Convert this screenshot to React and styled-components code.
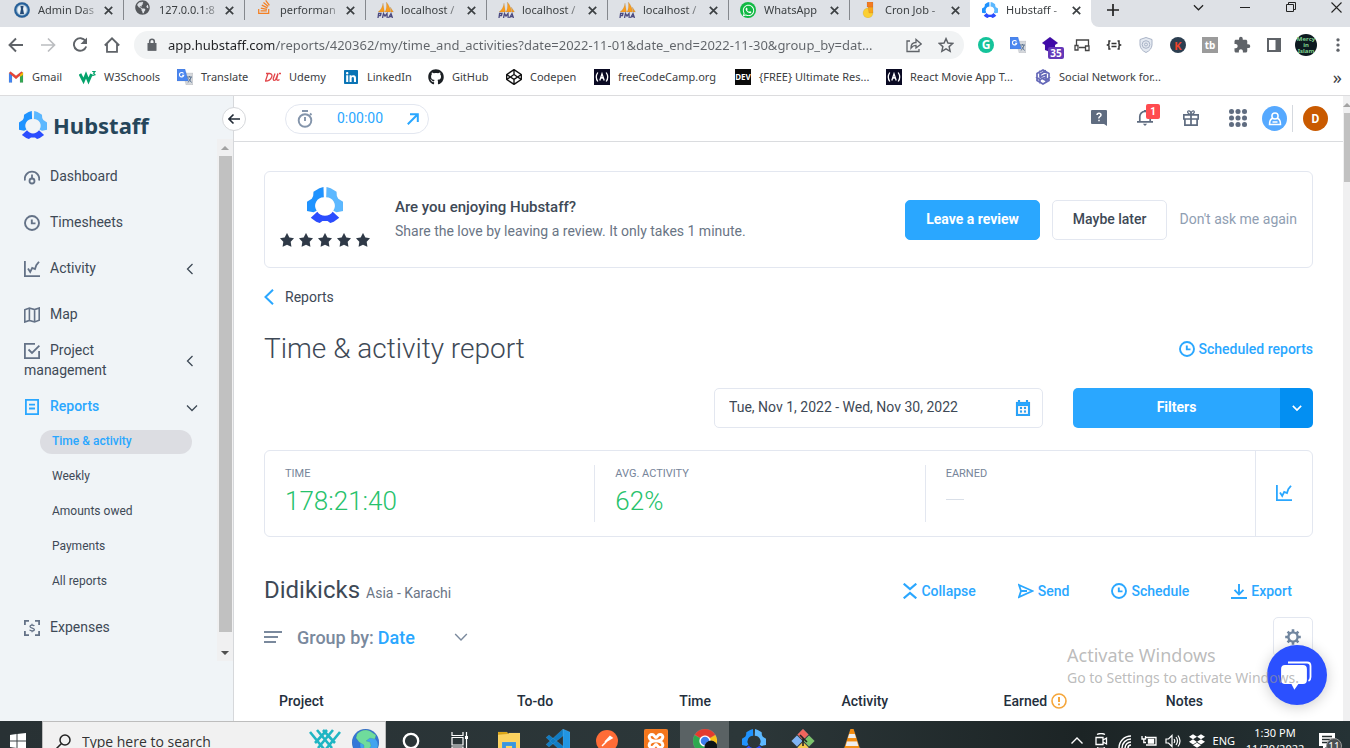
import React from "react";
import styled, { createGlobalStyle } from "styled-components";
import {
  FaStackOverflow,
  FaWhatsapp,
  FaGithub,
  FaLinkedin,
  FaCodepen,
  FaDropbox,
  FaGlobeAmericas,
} from "react-icons/fa";
import { MdExtension } from "react-icons/md";

const UI_FONT = '"Noto Sans", "Open Sans", sans-serif';
const APP_FONT = 'Roboto, "Liberation Sans", sans-serif';
const BLUE = "#2aa7ff";

const GlobalStyle = createGlobalStyle`
  *, *::before, *::after { box-sizing: border-box; }
  body { margin: 0; overflow: hidden; font-family: ${APP_FONT}; font-size: 14px; color: #3e4956; background: #fff; }
  button, input, select { font: inherit; color: inherit; }
  button { border: 0; padding: 0; background: none; cursor: pointer; }
  a { color: inherit; text-decoration: none; }
  h1, h2, p, ul { margin: 0; padding: 0; font-weight: inherit; }
  ul { list-style: none; }
`;

/* ---------- icons ---------- */

const Svg = styled.svg.attrs({ "aria-hidden": true })`
  display: block;
  flex: none;
  width: ${(p) => p.$w || 16}px;
  height: ${(p) => p.$h || p.$w || 16}px;
  fill: none;
  stroke: ${(p) => p.$c || "currentColor"};
  stroke-width: ${(p) => p.$sw || 1.6};
`;

const HubMark = ({ size }) => (
  <Svg $w={size} viewBox="0 0 105 105" $sw={0.1}>
    <path fill="#1f93ff" d="M48 0 36 4 19 14 18 26 14 34 0 43V70L19 74 28 69A25 25 0 0 1 49 30Z" />
    <path fill="#5cb8ff" d="M57 0 69 4 86 14 87 26 91 34 105 43V70L86 74 77 69A25 25 0 0 0 56 30Z" />
    <path fill="#2b4dff" d="M11 90 30 72A27 27 0 0 0 75 72L94 90 78 101 68 105 60 99H45L37 105 27 101Z" />
  </Svg>
);
const DashIcon = () => (
  <Svg viewBox="0 0 16 16" $sw={1.8}>
    <path d="M1 11.5A7.2 7.2 0 1 1 15 11.5" />
    <circle cx="8" cy="12" r="2.5" />
    <path d="M8 9.5V5.5" />
  </Svg>
);
const ClockIcon = () => (
  <Svg viewBox="0 0 16 16" $sw={1.9}>
    <circle cx="8" cy="8" r="7" />
    <path d="M7.8 4.5V8.4H11.5" />
  </Svg>
);
const ChartIcon = () => (
  <Svg viewBox="0 0 16 16" $sw={1.8}>
    <path d="M.9 0V15.1H16" />
    <path d="M4 7.5 6.2 11 8.2 6.8 11 8 12.3 4.2 15 .8" />
  </Svg>
);
const MapIcon = () => (
  <Svg viewBox="0 0 16 16" $sw={1.6}>
    <path d="M.8 2.8 5.4 1 10.6 2.6 15.2 1V13.2L10.6 15 5.4 13.4.8 15ZM5.4 1V13.4M10.6 2.6V15" />
  </Svg>
);
const CheckBoxIcon = () => (
  <Svg viewBox="0 0 16 16" $sw={1.8}>
    <path d="M15.1 8V15.1H.9V.9H11" />
    <path d="M4.5 6.5 8 10 15.4 2.6" />
  </Svg>
);
const ReportIcon = () => (
  <Svg viewBox="0 0 16 16" $sw={1.8}>
    <path d="M1.9.9H14.1V15.1H1.9ZM5 5.7H11M5 9.5H11" />
  </Svg>
);
const ExpenseIcon = () => (
  <Svg viewBox="0 0 16 16" $sw={1.8}>
    <path d="M.9 5V.9H5M11 .9H15.1V5M15.1 11V15.1H11M5 15.1H.9V11" />
    <path strokeWidth="1.3" d="M10.3 6C9.8 4.900 6 4.600 6 6.500S10.400 7.800 10.400 9.600 6.200 11.200 5.600 9.800M8 3.800V5M8 11V12.200" />
  </Svg>
);
const ChevronIcon = ({ dir, size = 11, sw = 1.3 }) => (
  <Svg $w={size} viewBox="0 0 12 12" $sw={sw}>
    <path d={dir === "left" ? "M8.500 1 3.500 6 8.500 11" : "M1 3.500 6 8.500 11 3.500"} />
  </Svg>
);
const StarIcon = () => (
  <Svg $w={14} viewBox="0 0 24 24" $sw={0.1}>
    <path fill="#2f3947" d="M12 0 16 7.600 24 9 18.300 15 19.500 23.500 12 20 4.500 23.500 5.700 15 0 9 8 7.600Z" />
  </Svg>
);
const CollapseIcon = () => (
  <Svg $w={14} $h={16} viewBox="0 0 14 16" $sw={2.2}>
    <path d="M.7.700 7 6 13.300.700M.7 15.300 7 10 13.300 15.300" />
  </Svg>
);
const SendIcon = () => (
  <Svg viewBox="0 0 16 16" $sw={1.8}>
    <path d="M1 2 14.500 8 1 14 3 8ZM3 8H9" />
  </Svg>
);
const ExportIcon = () => (
  <Svg viewBox="0 0 16 16" $sw={1.9}>
    <path d="M8 1V11M3.500 6.800 8 11.300 12.500 6.800M0 15H16" />
  </Svg>
);
const CalendarIcon = () => (
  <Svg viewBox="0 0 16 16" $sw={0.1}>
    <path fill={BLUE} fillRule="evenodd" d="M3 0H5V2H11V0H13V2H15V16H1V2H3ZM3 6V14H13V6ZM5 7H7V9H5ZM9 7H11V9H9ZM5 10.500H7V12.500H5ZM9 10.500H11V12.500H9Z" />
  </Svg>
);
const GearIcon = () => (
  <Svg viewBox="0 0 16 16" $sw={2.4}>
    <circle cx="8" cy="8" r="4.600" />
    <path strokeWidth="2.600" d="M8 .2V4M8 12V15.800M.2 8H4M12 8H15.800M2.600 2.600 5 5M11 11 13.400 13.400M13.400 2.600 11 5M2.600 13.400 5 11" />
  </Svg>
);
const PmaIcon = () => (
  <Svg $w={17} $h={16} viewBox="0 0 17 16" $sw={0.1}>
    <path fill="#f79c1f" d="M1 10C4 8 5.500 5 6 1L7.500 10ZM8 10C9.500 7 9.800 4 9.300 0 12 3 13.500 7 13.500 10ZM14 10 13.300 5 16.500 10Z" />
    <path fill="none" stroke="#4b4a80" strokeWidth="1.300" d="M1 16 1.600 11.500H4L3.500 13.700H1.500M5.500 16 6.500 11.500 8 14 10 11.500 10.200 16M11.500 16 14 11.500 15.500 16M12.500 14.500H15" />
  </Svg>
);
const SealIcon = () => (
  <Svg viewBox="0 0 16 16" $sw={0.1}>
    <circle cx="8" cy="8" r="7.800" fill="#24609c" />
    <circle cx="8" cy="8" r="5.800" fill="#8fb9dc" />
    <circle cx="8" cy="8" r="4.800" fill="#e8f1f8" />
    <path fill="#234a78" d="M6.500 4H9.500L9 7 10 12H6L7 7Z" />
  </Svg>
);
const CronIcon = () => (
  <Svg viewBox="0 0 16 16" $sw={0.1}>
    <circle cx="7" cy="11" r="5" fill="#fbcf33" />
    <path fill="#f9a51b" d="M7 5H12V11H8Z" />
    <path fill="#f47b20" d="M6 0H12V5H6Z" />
  </Svg>
);
const GmailIcon = () => (
  <Svg viewBox="0 0 16 16" $sw={0.1}>
    <path fill="#4285f4" d="M1 13.500V4L4 6V13.500Z" />
    <path fill="#34a853" d="M15 13.500V4L12 6V13.500Z" />
    <path fill="#ea4335" d="M1 4 2.500 2.500 8 6.700 13.500 2.500 15 4 8 10Z" />
    <path fill="#fbbc04" d="M12 5.500 15 3V6L12 8Z" />
  </Svg>
);
const W3Icon = () => (
  <Svg $w={17} $h={16} viewBox="0 0 17 16" $sw={2.800} $c="#04a36b">
    <path d="M1 5 4.500 12 7 6 9.500 12 12.500 5" />
    <path strokeWidth="1.200" d="M13.200 2.500H16L14.600 4.200 16 5.700 13.200 6.600" />
  </Svg>
);
const TranslateIcon = () => (
  <Svg viewBox="0 0 16 16" $sw={0.1}>
    <path fill="#d5d8dc" d="M6 4H16V16H9Z" />
    <path fill="#4a86f0" d="M0 0H8L11.500 12H0Z" />
    <path fill="none" stroke="#fff" strokeWidth="1.100" d="M6.500 4.500A2.200 2.200 0 1 0 6.800 6.200H5" />
    <path fill="none" stroke="#5b7290" strokeWidth="1" d="M9.800 8H15M12.500 7V8M14 8C13.500 11 12 12.500 10.800 13.500M11.500 9.500 14.500 13.500" />
  </Svg>
);
const UdemyIcon = () => (
  <Svg viewBox="0 0 16 16" $sw={1.300} $c="#e2474b">
    <path d="M1 4.500H4.500Q8 5 6.500 8.500T.5 12L3 4.500M10 4.500 8.300 9.500Q8 12 10.500 11L13 4.500 11.500 10.500Q12.500 12 14.500 10.500M14 4.500H16" />
  </Svg>
);
const FccIcon = () => (
  <Svg viewBox="0 0 16 16" $sw={1.300} $c="#fff">
    <path fill="#0a0a23" stroke="none" d="M0 0H16V16H0Z" />
    <path d="M3.800 3.500Q.8 8 3.800 12.500M12.200 3.500Q15.200 8 12.200 12.500" />
    <path d="M5.800 11.500 8 4.800 10.200 11.500M7 9.500Q8 8 9 9.500" />
  </Svg>
);
const KnotIcon = () => (
  <Svg viewBox="0 0 16 16" $sw={1.700} $c="#6568b8">
    <path d="M8 1 14 4.500V11.500L8 15 2 11.500V4.500ZM5 1.500V8L11 11.500M11 1.500 5 5.500M15 8 11 11.500V5.500L5 8M5 14.500 5 10.500 11 8M1 8 5 10.500" />
  </Svg>
);

/* ---------- browser chrome ---------- */

const Desktop = styled.div`
  position: relative;
  display: flex;
  flex-direction: column;
  height: 100vh;
  overflow: hidden;
`;
const TabStrip = styled.div`
  display: flex;
  height: 27px;
  padding-left: 2px;
  background: #dee1e6;
  font: 11px/20px ${UI_FONT};
`;
const Tab = styled.div`
  display: flex;
  align-items: center;
  flex: 0 1 121px;
  min-width: 0;
  padding: 0 8px 7px 12px;
  background: ${(p) => (p.$active ? "#fff" : "transparent")};
  border-radius: 0 0 ${(p) => (p.$rounded ? "8px" : "0")} 0;
  color: #3c4043;
`;
const TabIcon = styled.span`
  flex: 0 0 24px;
`;
const TabTitle = styled.span`
  flex: 1;
  min-width: 0;
  white-space: nowrap;
  mask-image: linear-gradient(to right, #000 ${(p) => (p.$fade ? "70%" : "100%")}, transparent);
`;
const TabClose = styled.button`
  display: grid;
  place-items: center;
  width: 14px;
  height: 16px;
  color: #3c4043;
`;
const TabDivider = styled.span`
  width: 1px;
  height: 20px;
  margin: 0 -1px 0 0;
  background: #85888d;
`;
const StripEnd = styled.div`
  display: flex;
  flex: 1;
  justify-content: space-between;
  align-items: center;
  padding: 0 8px 7px 15px;
  background: #dee1e6;
  border-bottom-left-radius: 8px;
  color: #222;
`;
const StripBack = styled.div`
  display: flex;
  flex: 1;
  background: #fff;
`;
const WindowButtons = styled.div`
  display: flex;
  gap: 35px;
  padding-bottom: 6px;
`;
const Toolbar = styled.div`
  display: flex;
  align-items: center;
  height: 36px;
  padding-left: 8px;
  background: #fff;
  color: #5f6368;
`;
const NavButtons = styled.div`
  display: flex;
  gap: 16px;
  width: 126px;
`;
const IconButton = styled.button`
  display: grid;
  place-items: center;
  flex: none;
  width: ${(p) => p.$w || 16}px;
  height: 24px;
  color: ${(p) => p.$c || "inherit"};
`;
const Omnibox = styled.label`
  display: flex;
  align-items: center;
  flex: 1;
  min-width: 0;
  height: 28px;
  padding: 0 4px 0 12px;
  gap: 10px;
  border-radius: 14px;
  background: #f1f3f4;
`;
const UrlInput = styled.input`
  flex: 1;
  min-width: 0;
  border: 0;
  padding: 0;
  outline: 0;
  font: 13px/20px ${UI_FONT};
  color: transparent;
  background: linear-gradient(to right, #202124 106px, #5f6368 106px);
  background-clip: text;
`;
const Extensions = styled.div`
  display: flex;
  gap: 8px;
  padding-left: 10px;
`;
const ExtBadge = styled.span`
  display: grid;
  place-items: center;
  width: ${(p) => p.$size || 16}px;
  height: ${(p) => p.$size || 16}px;
  border-radius: ${(p) => p.$r || "50%"};
  background: ${(p) => p.$bg};
  color: ${(p) => p.$c || "#fff"};
  font: bold ${(p) => p.$fs || 11}px/1 ${UI_FONT};
  text-align: center;
`;
const Overlay = styled.span`
  position: relative;
`;
const Count = styled.span`
  position: absolute;
  left: 6px;
  top: 10px;
  width: 16px;
  border-radius: 2px;
  background: #6438b8;
  color: #fff;
  font: bold 10px/12px ${UI_FONT};
`;
const Bookmarks = styled.nav`
  display: flex;
  height: 33px;
  padding: 0 8px 5px;
  background: #fff;
  border-bottom: 1px solid #dcdcde;
  font: 11px/28px ${UI_FONT};
  color: #3c4043;
`;
const Bookmark = styled.a`
  display: flex;
  align-items: center;
  gap: 8px;
  flex: 0 1 ${(p) => p.$w}px;
  white-space: nowrap;
`;
const More = styled.button`
  margin-left: auto;
  font-size: 18px;
  line-height: 20px;
`;

const CloseX = () => (
  <Svg $w={9} viewBox="0 0 9 9" $sw={1.700}>
    <path d="M.8.800 8.200 8.200M8.200.800.8 8.200" />
  </Svg>
);

const tabs = [
  ["Admin Das", <SealIcon />],
  ["127.0.0.1:8", <FaGlobeAmericas size={15} color="#55585c" />],
  ["performan", <FaStackOverflow size={16} color="#f48024" />],
  ["localhost /", <PmaIcon />],
  ["localhost /", <PmaIcon />],
  ["localhost /", <PmaIcon />],
  ["WhatsApp", <ExtBadge $bg="#12b944"><FaWhatsapp size={13} /></ExtBadge>],
  ["Cron Job -", <CronIcon />],
  ["Hubstaff -", <HubMark size={16} />],
];

const bookmarks = [
  ["Gmail", 71, <GmailIcon />],
  ["W3Schools", 98, <W3Icon />],
  ["Translate", 88, <TranslateIcon />],
  ["Udemy", 78, <UdemyIcon />],
  ["LinkedIn", 85, <FaLinkedin size={16} color="#0a74b5" />],
  ["GitHub", 78, <FaGithub size={16} color="#1b1f23" />],
  ["Codepen", 88, <FaCodepen size={16} color="#111" />],
  ["freeCodeCamp.org", 141, <FccIcon />],
  ["{FREE} Ultimate Res...", 151, <ExtBadge $bg="#0b0b0b" $r="0" $fs={8}>DEV</ExtBadge>],
  ["React Movie App T...", 149, <FccIcon />],
  ["Social Network for...", 150, <KnotIcon />],
];

function Chrome() {
  return (
    <header>
      <TabStrip>
        {tabs.map(([title, icon], i) => (
          <React.Fragment key={i}>
            <Tab $active={i === 8} $rounded={i === 7}>
              <TabIcon>{icon}</TabIcon>
              <TabTitle $fade={title !== "WhatsApp"}>{title}</TabTitle>
              <TabClose aria-label="Close tab"><CloseX /></TabClose>
            </Tab>
            {i < 7 && <TabDivider />}
          </React.Fragment>
        ))}
        <StripBack>
          <StripEnd>
            <IconButton $w={13} aria-label="New tab">
              <Svg $w={12} viewBox="0 0 12 12" $sw={1.700}><path d="M6 0V12M0 6H12" /></Svg>
            </IconButton>
            <WindowButtons>
              <IconButton $w={11} aria-label="Search tabs"><ChevronIcon /></IconButton>
              <IconButton $w={11} aria-label="Minimize">
                <Svg $w={10} viewBox="0 0 10 10" $sw={1}><path d="M0 5.500H10" /></Svg>
              </IconButton>
              <IconButton $w={11} aria-label="Restore">
                <Svg $w={10} viewBox="0 0 10 10" $sw={1}><path d="M.5 2.500H7.500V9.500H.5ZM2.500 2.500V.5H9.500V7.500H7.500" /></Svg>
              </IconButton>
              <IconButton $w={11} aria-label="Close">
                <Svg $w={11} viewBox="0 0 11 11" $sw={1.100}><path d="M.5.500 10.500 10.500M10.500.500.5 10.500" /></Svg>
              </IconButton>
            </WindowButtons>
          </StripEnd>
        </StripBack>
      </TabStrip>
      <Toolbar>
        <NavButtons>
          <IconButton aria-label="Back"><Svg viewBox="0 0 16 16" $sw={1.900}><path d="M15 8H2M8 1.500 1.500 8 8 14.500" /></Svg></IconButton>
          <IconButton aria-label="Forward" $c="#bbbdc0"><Svg viewBox="0 0 16 16" $sw={1.700}><path d="M1 8H14M8 1.500 14.500 8 8 14.500" /></Svg></IconButton>
          <IconButton aria-label="Reload"><Svg viewBox="0 0 16 16" $sw={1.900}><path d="M13.500 4A6.300 6.300 0 1 0 14.200 9.500" /><path fill="currentColor" stroke="none" d="M15 .5V7H8.500Z" /></Svg></IconButton>
          <IconButton aria-label="Home"><Svg viewBox="0 0 16 16" $sw={1.800}><path d="M.8 8.500 8 1.300 15.200 8.500M3 7V14.900H13V7" /></Svg></IconButton>
        </NavButtons>
        <Omnibox>
          <Svg $w={12} $h={14} viewBox="0 0 12 14" $sw={1.600}>
            <path fill="currentColor" stroke="none" d="M2 5H10V12.500H2Z" />
            <path d="M3.700 6V3.500A2.300 2.300 0 0 1 8.300 3.500V6" />
            <path d="M2.300 5.800H9.700V12H2.300Z" />
          </Svg>
          <UrlInput
            aria-label="Address"
            readOnly
            value="app.hubstaff.com/reports/420362/my/time_and_activities?date=2022-11-01&date_end=2022-11-30&group_by=dat..."
          />
          <IconButton aria-label="Share"><Svg viewBox="0 0 16 16" $sw={1.300}><path d="M4 4H1V14.500H13V12M5 11C5 7 7 5.500 10 5.500V2.500L15.200 7 10 11V8.300C8 8.300 6.500 9 5 11Z" /></Svg></IconButton>
          <IconButton aria-label="Bookmark" $w={28}><Svg viewBox="0 0 24 24" $sw={2.200}><path d="M12 2.500 14.900 9 22 9.700 16.700 14.400 18.200 21.400 12 17.800 5.800 21.400 7.300 14.400 2 9.700 9.100 9Z" /></Svg></IconButton>
        </Omnibox>
        <Extensions>
          <IconButton $w={24} aria-label="Grammarly"><ExtBadge $bg="#15c39a" $fs={12}>G</ExtBadge></IconButton>
          <IconButton $w={24} aria-label="Translate"><TranslateIcon /></IconButton>
          <IconButton $w={24} aria-label="Counter">
            <Overlay>
              <Svg viewBox="0 0 16 16" $sw={0.100}><path fill="#3f0aa8" d="M8 0 16 6 13 8V13L8 15 3 13V8L0 6Z" /></Svg>
              <Count>35</Count>
            </Overlay>
          </IconButton>
          <IconButton $w={24} aria-label="Devices"><Svg viewBox="0 0 16 16" $sw={1.300} $c="#444"><path d="M2.500 8V3H14.500V9M5 10.500H11M1 8.500H4V13H1ZM11.500 9H15V13.500H11.500Z" /></Svg></IconButton>
          <IconButton $w={24} aria-label="JSON"><Svg viewBox="0 0 16 16" $sw={1.500} $c="#333"><path d="M4.500 4H3V7L1.500 8 3 9V12H4.500M11.500 4H13V7L14.500 8 13 9V12H11.500M5.500 6.500H10.500M5.500 9.500H10.500" /></Svg></IconButton>
          <IconButton $w={24} aria-label="Shield"><Svg viewBox="0 0 16 16" $sw={1} $c="#a9b3c6"><path fill="#e4e9f1" d="M8 .5 14 2.500V8Q13.500 13 8 15.500 2.500 13 2 8V2.500Z" /><circle cx="8" cy="7.500" r="3.800" /><circle cx="8" cy="7.500" r="1.500" /></Svg></IconButton>
          <IconButton $w={24} aria-label="Keywords"><ExtBadge $bg="#2c3e50" $c="#f0432c">K</ExtBadge></IconButton>
          <IconButton $w={24} aria-label="TubeBuddy"><ExtBadge $bg="#9b9b9b" $r="0" $fs={10}>tb</ExtBadge></IconButton>
          <IconButton $w={24} aria-label="Extensions"><MdExtension size={18} /></IconButton>
          <IconButton $w={24} aria-label="Side panel"><Svg viewBox="0 0 16 16" $sw={2}><path d="M2 2H14V14H2Z" /><path fill="currentColor" stroke="none" d="M9.500 2H14V14H9.500Z" /></Svg></IconButton>
          <IconButton $w={24} aria-label="Profile"><ExtBadge $bg="#0d1a20" $c="#7fd18f" $size={22} $fs={6}>Mercy in Islam</ExtBadge></IconButton>
          <IconButton $w={24} aria-label="Menu"><Svg viewBox="0 0 16 16" $sw={0.100}><g fill="currentColor"><circle cx="8" cy="2.800" r="1.600" /><circle cx="8" cy="8" r="1.600" /><circle cx="8" cy="13.200" r="1.600" /></g></Svg></IconButton>
        </Extensions>
      </Toolbar>
      <Bookmarks aria-label="Bookmarks">
        {bookmarks.map(([label, w, icon]) => (
          <Bookmark key={label} href="#" $w={w}>{icon}{label}</Bookmark>
        ))}
        <More aria-label="More bookmarks">»</More>
      </Bookmarks>
    </header>
  );
}

/* ---------- Hubstaff sidebar ---------- */

const Page = styled.div`
  position: relative;
  display: flex;
  flex: 1;
  min-height: 0;
`;
const Sidebar = styled.aside`
  position: relative;
  flex: 0 0 234px;
  display: flex;
  flex-direction: column;
  background: #f0f4f7;
  border-right: 1px solid #d6d8db;
`;
const Brand = styled.a`
  display: flex;
  align-items: center;
  gap: 6px;
  height: 43px;
  padding: 14px 0 0 19px;
  font: bold 22px/26px "Noto Sans", sans-serif;
  color: #26465b;
`;
const SideBody = styled.div`
  display: flex;
  height: 522px;
`;
const Menu = styled.ul`
  flex: 1;
  padding: 14px 17px 0 24px;
`;
const Item = styled.li`
  display: flex;
  align-items: center;
  justify-content: space-between;
  height: 46px;
  color: ${(p) => (p.$active ? BLUE : "#647287")};
  font-weight: ${(p) => (p.$active ? 500 : 400)};
`;
const ItemLink = styled.a`
  max-width: 128px;
  line-height: 20px;
  svg { display: inline-block; vertical-align: -4px; margin-right: 10px; }
  span { color: ${(p) => (p.$active ? BLUE : "#3e4956")}; }
`;
const Caret = styled.button`
  display: grid;
  place-items: center;
  width: 16px;
  height: 20px;
  margin-right: ${(p) => (p.$open ? 0 : "2px")};
  padding-top: ${(p) => (p.$open ? "4px" : "2px")};
  color: #3e4956;
`;
const SubMenu = styled.li`
  display: grid;
  gap: 11px;
  padding: 1px 8px 10px 16px;
`;
const SubLink = styled.a`
  display: block;
  height: 24px;
  padding-left: 12px;
  border-radius: 12px;
  font-size: 12px;
  line-height: 22px;
  font-weight: ${(p) => (p.$active ? 500 : 400)};
  color: ${(p) => (p.$active ? BLUE : "#3e4956")};
  background: ${(p) => (p.$active ? "#dcdde2" : "transparent")};
`;
const Bar = styled.div`
  display: flex;
  flex-direction: column;
  align-items: center;
  flex: 0 0 16px;
  background: #f0f0f1;
  overflow: hidden;
`;
const Arrow = styled.span`
  display: grid;
  place-items: center;
  height: ${(p) => (p.$end ? 29 : 17)}px;
  padding-top: ${(p) => (p.$end ? 12 : 0)}px;
  color: ${(p) => p.$c || "#505050"};
`;
const Thumb = styled.span`
  flex: none;
  width: 13px;
  height: ${(p) => p.$h};
  margin-left: 1px;
  background: #c1c1c1;
`;
const CollapseButton = styled.button`
  position: absolute;
  right: -13px;
  top: 11px;
  z-index: 2;
  display: grid;
  place-items: center;
  width: 24px;
  height: 24px;
  border: 1px solid #d6d8db;
  border-radius: 50%;
  background: #fff;
  color: #222b36;
`;
const Tri = ({ up }) => (
  <Svg $w={8} $h={4} viewBox="0 0 8 4" $sw={0.100}>
    <path fill="currentColor" d={up ? "M4 0 8 4H0Z" : "M0 0H8L4 4Z"} />
  </Svg>
);

const menu = [
  ["Dashboard", DashIcon],
  ["Timesheets", ClockIcon],
  ["Activity", ChartIcon, "left"],
  ["Map", MapIcon],
  ["Project management", CheckBoxIcon, "left"],
  ["Reports", ReportIcon, "down"],
  ["Expenses", ExpenseIcon],
];
const reports = ["Time & activity", "Weekly", "Amounts owed", "Payments", "All reports"];

function SideNav() {
  return (
    <Sidebar>
      <Brand href="#"><HubMark size={28} />Hubstaff</Brand>
      <CollapseButton aria-label="Collapse sidebar">
        <Svg $w={12} viewBox="0 0 12 12" $sw={1.600}><path d="M12 6H1.500M5.500 1.500 1 6 5.500 10.500" /></Svg>
      </CollapseButton>
      <SideBody>
        <Menu>
          {menu.map(([label, Icon, caret]) => {
            const active = label === "Reports";
            return (
              <React.Fragment key={label}>
                <Item $active={active}>
                  <ItemLink href="#" $active={active}><Icon /><span>{label}</span></ItemLink>
                  {caret && (
                    <Caret $open={active} aria-label={"Toggle " + label}><ChevronIcon dir={caret} size={12} /></Caret>
                  )}
                </Item>
                {active && (
                  <SubMenu>
                    {reports.map((r, i) => <SubLink key={r} href="#" $active={i === 0}>{r}</SubLink>)}
                  </SubMenu>
                )}
              </React.Fragment>
            );
          })}
        </Menu>
        <Bar>
          <Arrow $c="#a3a3a3"><Tri up /></Arrow>
          <Thumb $h="476px" />
          <Arrow $end><Tri /></Arrow>
        </Bar>
      </SideBody>
    </Sidebar>
  );
}

/* ---------- Hubstaff main area ---------- */

const Main = styled.main`
  display: flex;
  flex-direction: column;
  flex: 1;
  min-width: 0;
  overflow: hidden;
`;
const TopBar = styled.div`
  display: flex;
  flex: none;
  align-items: center;
  justify-content: space-between;
  height: 46px;
  padding: 0 15px 0 51px;
  border-bottom: 1px solid #dadcdf;
  color: #5f6c80;
`;
const Timer = styled.div`
  display: flex;
  align-items: center;
  justify-content: space-between;
  width: 144px;
  height: 30px;
  padding: 0 9px 0 11px;
  border: 1px solid #e3e7f0;
  border-radius: 15px;
  color: ${BLUE};
  span { padding-bottom: 2px; }
`;
const TopIcons = styled.div`
  display: flex;
  align-items: center;
  gap: 15px;
`;
const TopGroup = styled.div`
  display: flex;
  align-items: center;
  gap: 30px;
  padding-bottom: 2px;
`;
const AccountGroup = styled.div`
  display: flex;
  align-items: center;
`;
const NotificationBadge = styled.span`
  position: absolute;
  left: 9px;
  top: -6px;
  width: 14px;
  border-radius: 2px;
  background: #ff4b4f;
  color: #fff;
  font-size: 10px;
  font-weight: 700;
  line-height: 15px;
`;
const Avatar = styled.button`
  display: grid;
  place-items: center;
  width: 25px;
  height: 25px;
  border-radius: 50%;
  background: ${(p) => p.$bg};
  color: #fff;
  font-size: 12px;
  font-weight: 700;
`;
const VLine = styled.span`
  width: 1px;
  height: 27px;
  margin: 0 10px 0 5px;
  background: #d5d9df;
`;
const Content = styled.div`
  padding: 29px 30px 0;
`;
const ReviewCard = styled.section`
  display: flex;
  gap: 25px;
  height: 97px;
  padding: 15px;
  border: 1px solid #e3e7f0;
  border-radius: 6px;
`;
const Rating = styled.div`
  display: flex;
  flex-direction: column;
  align-items: center;
  gap: 10px;
`;
const Stars = styled.div`
  display: flex;
  gap: 5px;
`;
const ReviewText = styled.div`
  flex: 1;
  align-self: center;
  padding-bottom: 2px;
  line-height: 24px;
  color: #6a7585;
`;
const Strong = styled.p`
  font-size: 15px;
  font-weight: 500;
  color: #3e4956;
`;
const CardActions = styled.div`
  display: flex;
  align-items: center;
  align-self: center;
  gap: 12px;
`;
const Button = styled.button`
  height: 40px;
  padding: 0 20px 2px;
  border: 1px solid ${(p) => (p.$primary ? BLUE : "#e3e7f0")};
  border-radius: 5px;
  background: ${(p) => (p.$primary ? BLUE : "#fff")};
  color: ${(p) => (p.$primary ? "#fff" : "#3e4956")};
  font-weight: ${(p) => (p.$primary ? 700 : 500)};
`;
const Muted = styled.a`
  padding-bottom: 2px;
  color: #8f9eb2;
`;
const Breadcrumb = styled.a`
  display: flex;
  align-items: center;
  gap: 11px;
  margin-top: 19px;
  line-height: 20px;
  svg { color: ${BLUE}; }
`;
const Row = styled.div`
  display: flex;
  align-items: center;
  justify-content: ${(p) => p.$justify || "space-between"};
  gap: ${(p) => p.$gap || 0}px;
  height: ${(p) => p.$h || 40}px;
  margin-top: ${(p) => p.$mt}px;
`;
const Title = styled.h1`
  font-size: 28px;
  font-weight: 300;
  line-height: 40px;
`;
const Action = styled.button`
  display: flex;
  align-items: center;
  gap: 4px;
  font-weight: 500;
  line-height: 20px;
  color: ${BLUE};
`;
const ActionBar = styled.div`
  display: flex;
  gap: 42px;
  padding-right: 21px;
`;
const DateField = styled.label`
  display: flex;
  align-items: center;
  width: 329px;
  height: 40px;
  padding: 0 11px 0 14px;
  border: 1px solid #e3e7f0;
  border-radius: 5px;
  input { flex: 1; min-width: 0; border: 0; padding: 0 0 2px; outline: 0; background: none; }
`;
const SplitButton = styled.div`
  display: flex;
  width: 240px;
  height: 40px;
  border-radius: 5px;
  overflow: hidden;
  color: #fff;
`;
const FilterButton = styled.button`
  flex: 1;
  padding-bottom: 2px;
  background: ${BLUE};
  font-weight: 700;
`;
const FilterCaret = styled.button`
  display: grid;
  place-items: center;
  width: 33px;
  background: #038ff2;
`;
const Stats = styled.section`
  display: flex;
  height: 87px;
  margin-top: 22px;
  padding: 14px 0;
  border: 1px solid #e3e7f0;
  border-radius: 6px;
`;
const Stat = styled.div`
  flex: 1;
  padding: 1px 0 0 20px;
  border-right: ${(p) => (p.$last ? 0 : 1)}px solid #e3e7f0;
`;
const StatLabel = styled.p`
  font-size: 11px;
  line-height: 16px;
  color: #76859a;
`;
const StatValue = styled.p`
  font-size: 26px;
  font-weight: 300;
  line-height: 38px;
  color: #27c26c;
`;
const Dash = styled.span`
  display: block;
  width: 18px;
  height: 1px;
  margin-top: 17px;
  background: #d9dfe8;
`;
const ChartButton = styled.button`
  display: grid;
  place-items: center;
  width: 57px;
  margin: -14px 0;
  padding-bottom: 2px;
  border-left: 1px solid #e3e7f0;
  color: ${BLUE};
`;
const OrgName = styled.h2`
  font-size: 24px;
  line-height: 32px;
  small { font-size: 14px; color: #6a7585; }
`;
const GroupField = styled.label`
  display: flex;
  align-items: center;
  gap: 4px;
  font-size: 18px;
  font-weight: 500;
  color: #7a899d;
  svg:first-child { margin-right: 11px; }
`;
const GroupSelect = styled.select`
  width: 72px;
  appearance: none;
  border: 0;
  padding: 0;
  background: none;
  color: ${BLUE};
`;
const GearButton = styled.button`
  display: grid;
  place-items: center;
  width: 40px;
  height: 40px;
  border: 1px solid #e3e7f0;
  border-radius: 5px;
  color: #7287a0;
`;
const DataTable = styled.table`
  width: 100%;
  margin-top: 26px;
  border-collapse: collapse;
  table-layout: fixed;
  color: #242f3d;
  th { height: 36px; padding: 0 0 0 15px; text-align: left; font-weight: 500; }
  th:first-child { width: 238px; }
`;
const WithIcon = styled.span`
  display: flex;
  align-items: center;
  gap: 4px;
`;
const PageBar = styled(Bar)`
  flex: 0 0 7px;
  align-items: flex-start;
`;
const ChatButton = styled.button`
  position: absolute;
  right: 23px;
  bottom: 16px;
  display: grid;
  place-items: center;
  width: 60px;
  height: 60px;
  border-radius: 50%;
  background: #2b50ff;
  box-shadow: 0 2px 14px rgba(0, 0, 0, 0.2);
`;
const Watermark = styled.div`
  position: absolute;
  left: calc(100% - 283px);
  bottom: 33px;
  white-space: nowrap;
  color: rgba(150, 150, 150, 0.65);
  font: 14px/20px ${UI_FONT};
  pointer-events: none;
  p:first-child { font-size: 18px; line-height: 26px; }
`;

function Report() {
  return (
    <Main>
      <TopBar>
        <Timer>
          <Svg $w={16} $h={18} viewBox="0 0 16 18" $sw={1.900} $c="#8495ab">
            <circle cx="8" cy="10.500" r="6.300" /><path d="M5 1H11M8 7V11M13 3.500 14.500 5" />
          </Svg>
          <span>0:00:00</span>
          <Svg $w={12} viewBox="0 0 12 12" $sw={2}><path d="M.8 11.200 10.500 1.500M3 1.200H10.800V9" /></Svg>
        </Timer>
        <TopIcons>
          <TopGroup>
            <IconButton aria-label="Help">
              <Svg viewBox="0 0 16 16" $sw={1.500} $c="#fff"><path fill="#5f6c80" stroke="none" d="M1 0H15Q16 0 16 1V16L13 14H1Q0 14 0 13V1Q0 0 1 0Z" /><path d="M6 5Q6 3.200 8 3.200T10 5Q10 6 8.800 6.700T8 8.500M8 9.800V11.300" /></Svg>
            </IconButton>
            <IconButton aria-label="Notifications">
              <Overlay>
                <Svg viewBox="0 0 16 16" $sw={1.700}><path d="M0 11.800H16M2.800 11.500V6.500A5.200 5.200 0 0 1 13.200 6.500V11.500" /><path fill="currentColor" stroke="none" d="M5.800 13.800H10.200L8 16ZM7 0H9V2H7Z" /></Svg>
                <NotificationBadge>1</NotificationBadge>
              </Overlay>
            </IconButton>
            <IconButton aria-label="Rewards">
              <Svg viewBox="0 0 16 16" $sw={1.700}><path d="M.8 4.800H15.200V9H.8ZM1.900 9V15.200H14.100V9M8 4.800V15" /><path strokeWidth="1.200" d="M8 4.500C4 4 4 .8 5.800 .8S8 3 8 4.500C8 3 8.500.8 10.200.8S12 4 8 4.500" /></Svg>
            </IconButton>
            <IconButton $w={18} aria-label="Apps">
              <Svg $w={18} viewBox="0 0 18 18" $sw={0.100}>
                <g fill="currentColor">
                  {[2.5, 9, 15.5].map((y) => [2.5, 9, 15.5].map((x) => <circle key={x + "-" + y} cx={x} cy={y} r="2.500" />))}
                </g>
              </Svg>
            </IconButton>
          </TopGroup>
          <AccountGroup>
            <Avatar $bg="#56a9ff" aria-label="Organization">
              <Svg $w={14} viewBox="0 0 14 14" $sw={1.500}><circle cx="7" cy="4" r="3.100" /><path d="M4.300 6.500Q1.500 7.500 1.500 12.500H12.500Q12.500 7.500 9.700 6.500M4.500 10H9.500" /></Svg>
            </Avatar>
            <VLine />
            <Avatar $bg="#c95a00">D</Avatar>
          </AccountGroup>
        </TopIcons>
      </TopBar>
      <Content>
        <ReviewCard>
          <Rating>
            <HubMark size={36} />
            <Stars>{[0, 1, 2, 3, 4].map((n) => <StarIcon key={n} />)}</Stars>
          </Rating>
          <ReviewText>
            <Strong>Are you enjoying Hubstaff?</Strong>
            <p>Share the love by leaving a review. It only takes 1 minute.</p>
          </ReviewText>
          <CardActions>
            <Button $primary>Leave a review</Button>
            <Button>Maybe later</Button>
            <Muted href="#">Don't ask me again</Muted>
          </CardActions>
        </ReviewCard>
        <Breadcrumb href="#">
          <Svg $w={10} $h={16} viewBox="0 0 10 16" $sw={2}><path d="M9 .7 1.500 8 9 15.300" /></Svg>
          Reports
        </Breadcrumb>
        <Row $mt={22}>
          <Title>Time & activity report</Title>
          <Action><ClockIcon />Scheduled reports</Action>
        </Row>
        <Row $mt={19} $gap={30} $justify="flex-end">
          <DateField>
            <input aria-label="Date range" readOnly value="Tue, Nov 1, 2022 - Wed, Nov 30, 2022" />
            <CalendarIcon />
          </DateField>
          <SplitButton>
            <FilterButton>Filters</FilterButton>
            <FilterCaret aria-label="More filters"><ChevronIcon size={10} sw={2} /></FilterCaret>
          </SplitButton>
        </Row>
        <Stats>
          <Stat><StatLabel>TIME</StatLabel><StatValue>178:21:40</StatValue></Stat>
          <Stat><StatLabel>AVG. ACTIVITY</StatLabel><StatValue>62%</StatValue></Stat>
          <Stat $last><StatLabel>EARNED</StatLabel><Dash /></Stat>
          <ChartButton aria-label="Show chart"><ChartIcon /></ChartButton>
        </Stats>
        <Row $mt={38} $h={32}>
          <OrgName>Didikicks <small>Asia - Karachi</small></OrgName>
          <ActionBar>
            <Action><CollapseIcon />Collapse</Action>
            <Action><SendIcon />Send</Action>
            <Action><ClockIcon />Schedule</Action>
            <Action><ExportIcon />Export</Action>
          </ActionBar>
        </Row>
        <Row $mt={10}>
          <GroupField>
            <Svg $w={18} $h={12} viewBox="0 0 18 12" $sw={2}><path d="M0 1H18M0 6H14M0 11H12" /></Svg>
            Group by:
            <GroupSelect defaultValue="Date"><option>Date</option><option>Member</option></GroupSelect>
            <ChevronIcon size={14} sw={1.200} />
          </GroupField>
          <GearButton aria-label="Table settings"><GearIcon /></GearButton>
        </Row>
        <DataTable>
          <thead>
            <tr>
              <th>Project</th>
              <th>To-do</th>
              <th>Time</th>
              <th>Activity</th>
              <th>
                <WithIcon>
                  Earned
                  <Svg viewBox="0 0 16 16" $sw={1.600} $c="#f5a63b"><circle cx="8" cy="8" r="7" /><path strokeWidth="2" d="M8 4V9M8 10.500V12.300" /></Svg>
                </WithIcon>
              </th>
              <th>Notes</th>
            </tr>
          </thead>
        </DataTable>
      </Content>
    </Main>
  );
}

/* ---------- Windows taskbar ---------- */

const Taskbar = styled.footer`
  display: flex;
  flex: none;
  height: 27px;
  overflow: hidden;
  background: linear-gradient(to right, #283134, #2c3739 55%, #1c2425 80%, #253235);
  color: #fff;
  font: 11px/16px ${UI_FONT};
`;
const Start = styled.button`
  display: grid;
  place-items: center;
  width: 42px;
  height: 40px;
  padding-right: 6px;
`;
const SearchField = styled.label`
  display: flex;
  align-items: center;
  width: 344px;
  height: 42px;
  padding: 0 6px 0 12px;
  gap: 11px;
  background: #f1f1f1;
  border: 1px solid #bdbdbd;
  color: #222;
  input { flex: 1; min-width: 0; border: 0; padding: 0; outline: 0; background: none; font: 14px/20px "Open Sans", sans-serif; }
  input::placeholder { color: #333; opacity: 1; }
`;
const AppButton = styled.button`
  display: grid;
  place-items: center;
  width: 49px;
  height: 40px;
  background: ${(p) => (p.$active ? "#5a6264" : "transparent")};
`;
const Tray = styled.div`
  display: flex;
  align-items: center;
  gap: 8px;
  height: 40px;
  margin-left: auto;
  padding-right: 14px;
`;
const ClockText = styled.time`
  width: 60px;
  margin: 0 5px 0 2px;
  text-align: center;
  white-space: nowrap;
`;
const NoticeCount = styled.span`
  position: absolute;
  left: 8px;
  top: 6px;
  width: 16px;
  height: 16px;
  border-radius: 50%;
  background: #4a4f52;
  border: 1px solid #9a9a9a;
  text-align: center;
  font-size: 10px;
  line-height: 14px;
`;

const apps = [
  <Svg $w={18} viewBox="0 0 18 18" $sw={2.300} $c="#fff"><circle cx="9" cy="9" r="7.200" /></Svg>,
  <Svg $w={18} viewBox="0 0 18 18" $sw={1.200} $c="#fff"><path d="M1 0V3.500H12V0M1 5.500H12V13H1ZM1 18V15H12V18M15.500 0V18" /><path strokeWidth="3" d="M15.500 4V7" /></Svg>,
  <Svg $w={22} $h={20} viewBox="0 0 22 20" $sw={0.100}><path fill="#dba310" d="M0 1H9L11 4H0Z" /><path fill="#fcd25e" d="M0 4 10 3 11 2H22V20H0Z" /><path fill="#3a96dd" d="M4 20V11H18V20H14V15H8V20Z" /></Svg>,
  <Svg $w={24} viewBox="0 0 24 24" $sw={0.100}><path fill="#2196e3" d="M17 0 24 3V21L17 24Z" /><path fill="#0f7cc4" d="M17 0V7L3 18 0 15.500ZM0 8.500 3 6 17 17V24Z" /></Svg>,
  <Svg $w={22} viewBox="0 0 22 22" $sw={1.500}><circle cx="11" cy="11" r="11" fill="#ff6c37" stroke="none" /><path stroke="#fff" d="M6 16 15 7M9 12 14 6.500 16 8Z" /></Svg>,
  <Svg $w={24} viewBox="0 0 24 24" $sw={0.100}><path fill="#f4761b" d="M2 0H22Q24 0 24 2V22Q24 24 22 24H2Q0 24 0 22V2Q0 0 2 0Z" /><path fill="none" stroke="#fff" strokeWidth="3" d="M10 12C4 11 4 5.500 8 5.500 10.500 5.500 10.500 8.500 12 8.500S13.500 5.500 16 5.500C20 5.500 20 11 14 12 20 13 20 18.500 16 18.500 13.500 18.500 13.500 15.500 12 15.500S10.500 18.500 8 18.500C4 18.500 4 13 10 12ZM9 12H15" /></Svg>,
  <Svg $w={24} viewBox="0 0 24 24" $sw={0.100}>
    <path fill="#e33b2e" d="M12 12 1.600 6A12 12 0 0 1 22.400 6Z" /><path fill="#fbc116" d="M12 12 22.400 6A12 12 0 0 1 12 24Z" /><path fill="#2da94f" d="M12 12V24A12 12 0 0 1 1.600 6Z" />
    <circle cx="12" cy="12" r="5.600" fill="#fff" /><circle cx="12" cy="12" r="4.300" fill="#3b7ded" /><circle cx="18" cy="18" r="6.500" fill="#0c1417" />
  </Svg>,
  <HubMark size={24} />,
  <Svg $w={24} viewBox="0 0 24 24" $sw={0.100}><path fill="#f0655c" d="M12 0 17.500 5.500 12 11 6.500 5.500Z" /><path fill="#7fb4f5" d="M6 6.500 11.500 12 6 17.500 .5 12Z" /><path fill="#7ac36a" d="M18 6.500 23.500 12 18 17.500 12.500 12Z" /><path fill="#f5c84b" d="M12 13 17.500 18.500 12 24 6.500 18.500Z" /><path fill="none" stroke="#222" strokeWidth="1.600" d="M9 6 16 13M12 9V17" /></Svg>,
  <Svg $w={22} $h={24} viewBox="0 0 22 24" $sw={0.100}><path fill="#f48b0c" d="M9.500 0H12.500L19 20H3Z" /><path fill="#eee" d="M8.200 5H13.800L15 9H7ZM6 12.500H16L17.300 17H4.700Z" /><path fill="#f48b0c" d="M2 19H20L22 24H0Z" /></Svg>,
];

function WindowsTaskbar() {
  return (
    <Taskbar>
      <Start aria-label="Start">
        <Svg viewBox="0 0 16 16" $sw={0.100}><path fill="#fff" d="M0 2 6.500 1V7.500H0ZM7.500 .900 16 0V7.500H7.500ZM0 8.500H6.500V15L0 14ZM7.500 8.500H16V16L7.500 15.100Z" /></Svg>
      </Start>
      <SearchField>
        <Svg viewBox="0 0 16 16" $sw={1.500}><circle cx="10" cy="6" r="5" /><path d="M6.500 9.500 .7 15.300" /></Svg>
        <input aria-label="Search" placeholder="Type here to search" />
        <Svg $w={32} $h={26} viewBox="0 0 32 26" $sw={2.600} $c="#1fb5c3"><path d="M1 3 19 25M8 1 23 19M14 1 26 14M31 3 13 25M24 1 9 19M18 1 6 14" /></Svg>
        <Svg $w={27} viewBox="0 0 27 27" $sw={0.100}><circle cx="13.500" cy="13.500" r="13.500" fill="#3478d8" /><circle cx="17" cy="16" r="9" fill="#42a4ef" /><path fill="#6fdc9c" d="M5 5Q11-1 18 2L24 6 23 10 18 9 14 12 18 13 19 17 15 23 12 20 12 16 7 13 4 9Z" /></Svg>
      </SearchField>
      {apps.map((icon, i) => <AppButton key={i} $active={i === 6} aria-label={"App " + (i + 1)}>{icon}</AppButton>)}
      <Tray>
        <Svg viewBox="0 0 16 16" $sw={1.400}><path d="M2.500 10.500 8 5 13.500 10.500" /></Svg>
        <Svg viewBox="0 0 16 16" $sw={1.300}><path d="M4 1.500Q8-.5 12 1.500M3 4.500H10V11.500H3ZM10 7 13.500 5V11L10 9M4 14.500Q8 16.500 12 14.500" /></Svg>
        <Svg viewBox="0 0 16 16" $sw={1.500}><path d="M2 15A12 12 0 0 1 14 3M5 15A9 9 0 0 1 14 6M8 15A6 6 0 0 1 14 9M11 15A3 3 0 0 1 14 12" /></Svg>
        <Svg viewBox="0 0 16 16" $sw={1.300}><path d="M5 4.500H15V12H5M1 3V6H4.500V3M2.800 6V9.500H5" /><path fill="#fff" d="M7.500 6.500H12.500V10H7.500Z" /></Svg>
        <Svg viewBox="0 0 16 16" $sw={1.200}><path d="M1 6H3.500L7 2.500V13.500L3.500 10H1ZM9 6Q10.500 8 9 10M11 4Q14 8 11 12M13 2.500Q17 8 13 13.500" /></Svg>
        <FaDropbox size={16} />
        <span>ENG</span>
        <ClockText>1:30 PM<br />11/30/2022</ClockText>
        <Overlay>
          <Svg $w={18} viewBox="0 0 18 18" $sw={1.500} $c="#242d2f"><path fill="#fff" stroke="none" d="M1 1H17V14H9L5 18V14H1Z" /><path d="M4 4.500H14M4 7.500H14M4 10.500H10" /></Svg>
          <NoticeCount>11</NoticeCount>
        </Overlay>
      </Tray>
    </Taskbar>
  );
}

export default function App() {
  return (
    <Desktop>
      <GlobalStyle />
      <Chrome />
      <Page>
        <SideNav />
        <Report />
        <PageBar>
          <Arrow $c="#a3a3a3"><Tri up /></Arrow>
          <Thumb $h="69px" />
        </PageBar>
        <ChatButton aria-label="Open chat">
          <Svg $w={32} $h={30} viewBox="0 0 32 30" $sw={1.800} $c="#fff">
            <path fill="#fff" d="M4 6H22Q25 6 25 9V20Q25 23 22 23H17L13.500 28 11 23H4Q1 23 1 20V9Q1 6 4 6Z" />
            <path d="M7 2.500H26Q29.500 2.500 29.500 6V17Q29.500 20 27.500 21" />
          </Svg>
        </ChatButton>
        <Watermark><p>Activate Windows</p><p>Go to Settings to activate Windows.</p></Watermark>
      </Page>
      <WindowsTaskbar />
    </Desktop>
  );
}
